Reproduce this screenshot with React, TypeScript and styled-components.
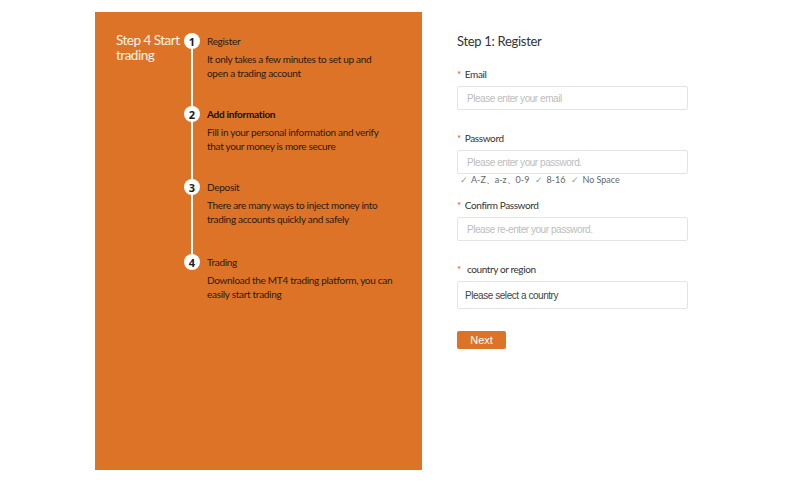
import React from "react";
import styled, { createGlobalStyle } from "styled-components";

const GlobalStyle = createGlobalStyle`
  html, body {
    margin: 0;
    padding: 0;
    background: #fff;
  }
  body {
    font-family: Lato, "Noto Sans", sans-serif;
  }
`

const Page = styled.div`
  display: flex;
  align-items: flex-start;
  padding: 12px 0 0 95px;
`
const Panel = styled.div`
  display: flex;
  width: 327px;
  height: 458px;
  box-sizing: border-box;
  padding: 21px 0 0 21px;
  background: #dd7327;
`
const PanelTitle = styled.div`
  width: 68px;
  flex-shrink: 0;
  font-size: 13.5px;
  line-height: 15px;
  letter-spacing: -0.5px;
  color: #fff4ea;
  white-space: pre;
`
const Steps = styled.div`
  display: flex;
  flex-direction: column;
`
const Step = styled.div<{ $last?: boolean }>`
  display: flex;
  height: ${p => (p.$last ? "auto" : "73px")};
  &:nth-child(3) {
    height: 75px;
  }
`
const Rail = styled.div`
  display: flex;
  flex-direction: column;
  align-items: center;
  width: 16px;
`
const Dot = styled.div`
  display: flex;
  align-items: center;
  justify-content: center;
  flex-shrink: 0;
  width: 16px;
  height: 16px;
  border-radius: 50%;
  background: #fff;
  color: #1c1c1c;
  font-family: "Noto Sans", sans-serif;
  font-size: 11px;
  font-weight: 700;
  line-height: 1;
`
const Line = styled.div`
  flex: 1;
  width: 2px;
  background: #fff;
`
const StepBody = styled.div`
  margin-left: 7px;
  color: #2a1a10;
`
const StepTitle = styled.div<{ $active?: boolean }>`
  font-size: 10px;
  line-height: 16px;
  letter-spacing: -0.3px;
  font-weight: ${p => (p.$active ? 700 : 400)};
  color: ${p => (p.$active ? "#111" : "#2a1a10")};
`
const StepText = styled.div`
  margin-top: 3px;
  font-size: 10px;
  line-height: 14px;
  letter-spacing: -0.3px;
  white-space: pre-line;
`

const Form = styled.div`
  display: flex;
  flex-direction: column;
  width: 231px;
  margin-left: 35px;
  padding-top: 21px;
`
const Heading = styled.div`
  font-size: 13px;
  line-height: 16px;
  letter-spacing: -0.3px;
  color: #333;
`
const Label = styled.div<{ $gap: number }>`
  margin-top: ${p => p.$gap}px;
  font-size: 10px;
  line-height: 12px;
  letter-spacing: -0.4px;
  color: #333;

  span {
    color: #e0561e;
    margin-right: 4px;
  }
`
const Input = styled.input`
  box-sizing: border-box;
  width: 231px;
  height: 24px;
  margin-top: 6px;
  padding: 0 9px;
  border: 1px solid #e4e4e4;
  border-radius: 2px;
  font-family: "Liberation Sans", Arial, sans-serif;
  font-size: 10px;
  letter-spacing: -0.45px;
  color: #333;
  outline: none;

  &::placeholder {
    color: #bdbdbd;
  }
`
const Select = styled.div`
  display: flex;
  align-items: center;
  box-sizing: border-box;
  width: 231px;
  height: 28px;
  margin-top: 6px;
  padding: 0 7px;
  border: 1px solid #e4e4e4;
  border-radius: 2px;
  font-family: "Liberation Sans", Arial, sans-serif;
  font-size: 10px;
  letter-spacing: -0.45px;
  color: #444;
`
const Hints = styled.div`
  display: flex;
  gap: 6px;
  margin-top: 1px;
  padding-left: 3px;
  font-size: 9px;
  line-height: 10px;
  color: #666;
`
const Hint = styled.span`
  &::before {
    content: "✓";
    color: #999;
    margin-right: 3px;
  }
`
const NextButton = styled.button`
  width: 49px;
  height: 18px;
  margin-top: 22px;
  padding: 0;
  border: none;
  border-radius: 2px;
  background: #dd7327;
  color: #fff;
  font-family: "Liberation Sans", Arial, sans-serif;
  font-size: 11px;
  cursor: pointer;
`

const steps = [
  { title: "Register", text: "It only takes a few minutes to set up and\nopen a trading account" },
  { title: "Add information", text: "Fill in your personal information and verify\nthat your money is more secure", active: true },
  { title: "Deposit", text: "There are many ways to inject money into\ntrading accounts quickly and safely" },
  { title: "Trading", text: "Download the MT4 trading platform, you can\neasily start trading" },
]

export default function App() {
  return (
    <>
      <GlobalStyle />
      <Page>
        <Panel>
          <PanelTitle>{"Step 4 Start\ntrading"}</PanelTitle>
          <Steps>
            {steps.map((s, i) => {
              const last = i === steps.length - 1
              return (
                <Step key={s.title} $last={last}>
                  <Rail>
                    <Dot>{i + 1}</Dot>
                    {!last && <Line />}
                  </Rail>
                  <StepBody>
                    <StepTitle $active={s.active}>{s.title}</StepTitle>
                    <StepText>{s.text}</StepText>
                  </StepBody>
                </Step>
              )
            })}
          </Steps>
        </Panel>
        <Form>
          <Heading>Step 1: Register</Heading>
          <Label $gap={19}><span>*</span>Email</Label>
          <Input placeholder="Please enter your email" />
          <Label $gap={22}><span>*</span>Password</Label>
          <Input placeholder="Please enter your password." />
          <Hints>
            <Hint>A-Z、a-z、0-9</Hint>
            <Hint>8-16</Hint>
            <Hint>No Space</Hint>
          </Hints>
          <Label $gap={14}><span>*</span>Confirm Password</Label>
          <Input placeholder="Please re-enter your password." />
          <Label $gap={22}><span>* </span>country or region</Label>
          <Select>Please select a country</Select>
          <NextButton>Next</NextButton>
        </Form>
      </Page>
    </>
  )
}
